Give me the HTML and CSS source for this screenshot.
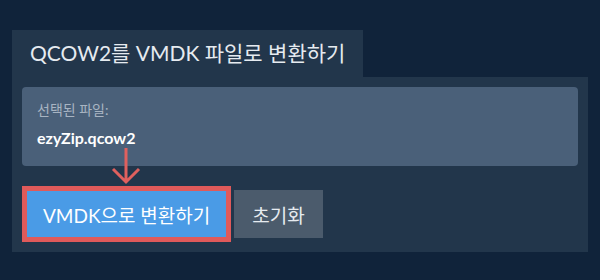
FILE: index.html
```html
<!DOCTYPE html>
<html lang="ko">
<head>
    <meta charset="UTF-8">
    <meta name="viewport" content="width=device-width, initial-scale=1.0">
    <title>QCOW2를 VMDK 파일로 변환하기</title>
    <link rel="stylesheet" href="styles.css">
</head>
<body>
    <div class="converter">
        <div class="tab">QCOW2를 VMDK 파일로 변환하기</div>
        <div class="panel">
            <!-- Selected file -->
            <div class="file-box">
                <div class="file-label">선택된 파일:</div>
                <div class="file-name">ezyZip.qcow2</div>
            </div>

            <!-- Actions -->
            <div class="actions">
                <button class="convert-button">VMDK으로 변환하기</button>
                <button class="reset-button">초기화</button>
            </div>

            <svg class="hint-arrow" width="32" height="38" viewBox="0 0 32 38">
                <path d="M16 0 V34 M3 21 L16 34 L29 21" fill="none" stroke="#e0605e" stroke-width="3"/>
            </svg>
        </div>
    </div>
</body>
</html>
```

FILE: styles.css
```css
body {
    margin: 0;
    padding: 0;
    background-color: #10233a;
    font-family: Lato, "Noto Sans CJK KR", sans-serif;
    color: #fff;
}
.converter {
    padding: 30px 12px 0;
}
.tab {
    display: inline-block;
    height: 47px;
    line-height: 46px;
    padding: 0 18px;
    font-size: 21px;
    color: #e6ebf0;
    background: #22364b;
}
.panel {
    position: relative;
    padding: 10px 10px 10px;
    background: #22364b;
}
.file-box {
    height: 79px;
    padding: 15px 15px 0;
    box-sizing: border-box;
    background: #4a6079;
    border-radius: 4px;
}
.file-label {
    font-size: 14px;
    line-height: 16px;
    color: #a8b4c2;
}
.file-name {
    margin-top: 10px;
    font-size: 16px;
    font-weight: bold;
    line-height: 20px;
}
.actions {
    display: flex;
    align-items: center;
    gap: 3px;
    margin-top: 20px;
}
.convert-button {
    height: 56px;
    padding: 0 16px;
    font-family: inherit;
    font-size: 19px;
    color: #fff;
    background: #4a9be6;
    border: 5px solid #e05a5a;
    cursor: pointer;
}
.reset-button {
    height: 48px;
    padding: 0 18px;
    font-family: inherit;
    font-size: 19px;
    color: #e6ebf0;
    background: #4b5b6c;
    border: none;
    cursor: pointer;
}
.hint-arrow {
    position: absolute;
    left: 98px;
    top: 71px;
}
```
